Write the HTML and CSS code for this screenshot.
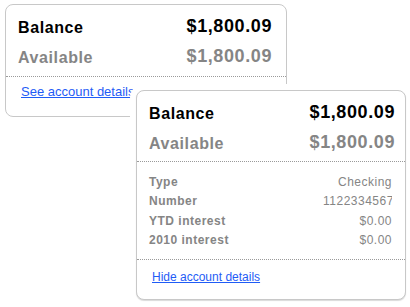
FILE: index.html
```html
<!DOCTYPE html>
<html lang="en">
<head>
  <meta charset="UTF-8">
  <title>Account balance</title>
  <link rel="stylesheet" href="styles.css">
</head>

<body>
  <div class="stage">
    <div class="card card-small">
      <div class="summary">
        <div class="row">
          <span class="label">Balance</span>
          <span class="amount">$1,800.09</span>
        </div>
        <div class="row muted">
          <span class="label">Available</span>
          <span class="amount">$1,800.09</span>
        </div>
      </div>
      <div class="footer">
        <a href="#" class="toggle">See account details</a>
      </div>
    </div>

    <div class="card card-open">
      <div class="summary">
        <div class="row">
          <span class="label">Balance</span>
          <span class="amount">$1,800.09</span>
        </div>
        <div class="row muted">
          <span class="label">Available</span>
          <span class="amount">$1,800.09</span>
        </div>
      </div>
      <div class="details">
        <span class="key">Type</span><span class="val">Checking</span>
        <span class="key">Number</span><span class="val">1122334567</span>
        <span class="key">YTD interest</span><span class="val">$0.00</span>
        <span class="key">2010 interest</span><span class="val">$0.00</span>
      </div>
      <div class="footer">
        <a href="#" class="toggle">Hide account details</a>
      </div>
    </div>
  </div>
</body>

</html>
```

FILE: styles.css
```css
body {
  margin: 0;
  background-color: #fff;
  font-family: "Liberation Sans", Arial, sans-serif;
}

.stage {
  position: relative;
  width: 410px;
  height: 307px;
  padding: 4px 0 0 5px;
  box-sizing: border-box;
}

.card {
  box-sizing: border-box;
  background-color: #fff;
  border: 1px solid #c8c8c8;
  border-radius: 8px;
}

.card-small {
  width: 282px;
}

/* the open card sits on top of the small one */
.card-open {
  position: absolute;
  top: 90px;
  left: 136px;
  width: 270px;
  box-shadow: 0 1px 1px rgba(0, 0, 0, 0.15), 0 0 0 6px #fff;
}

.summary {
  display: flex;
  flex-direction: column;
  gap: 10px;
  padding: 13px 14px 8px 12px;
  border-bottom: 1px dotted #9a9a9a;
}

.card-open .summary {
  padding: 13px 10px 7px 12px;
}

.row {
  display: flex;
  justify-content: space-between;
  align-items: flex-start;
  color: #000;
}

.row.muted {
  color: #858585;
}

.label {
  font-size: 16px;
  line-height: 20px;
  font-weight: bold;
  letter-spacing: 0.6px;
}

.amount {
  font-size: 18px;
  line-height: 16px;
  font-weight: bold;
  letter-spacing: 0.6px;
}

.details {
  display: grid;
  grid-template-columns: 1fr 69px;
  grid-auto-rows: 19.5px;
  align-items: center;
  padding: 10px 13px 9px 12px;
  border-bottom: 1px dotted #9a9a9a;
  color: #858585;
}

.key {
  font-size: 12px;
  font-weight: bold;
  letter-spacing: 0.5px;
}

.val {
  font-size: 12px;
  letter-spacing: 0.5px;
  text-align: right;
  white-space: nowrap;
  overflow: hidden;
}

.footer {
  padding: 6px 0 17px 15px;
  line-height: 15px;
}

.card-open .footer {
  padding: 9px 0 15px 15px;
  line-height: 14px;
}

.toggle {
  font-size: 13px;
  color: #1f5cf6;
  text-decoration: underline;
}

.card-open .toggle {
  font-size: 12px;
}
```
